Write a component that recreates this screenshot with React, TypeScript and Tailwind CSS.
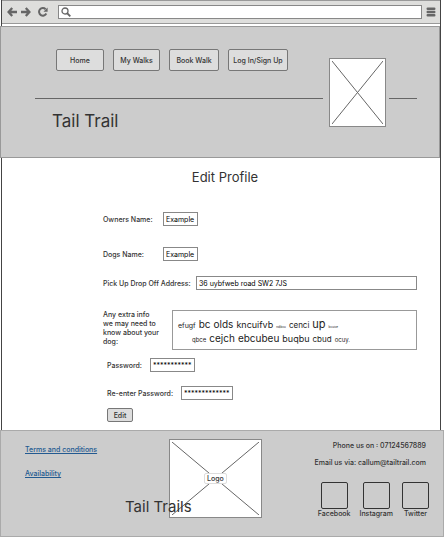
import { useId, type ReactNode } from "react";

const navItems = [
  { label: "Home", width: "w-12" },
  { label: "My Walks", width: "w-[47px]" },
  { label: "Book Walk", width: "w-[50px]" },
  { label: "Log In/Sign Up", width: "w-[60px]" },
];

const socials = ["Facebook", "Instagram", "Twitter"];

const notes = [
  [
    { text: "efugf", size: "text-[7px]" },
    { text: "bc", size: "text-[10px]" },
    { text: "olds", size: "text-[10px]" },
    { text: "kncuifvb", size: "text-[9px]" },
    { text: "ndjbcu", size: "text-[3px]" },
    { text: "cenci", size: "text-[8px]" },
    { text: "up", size: "text-[11px]" },
    { text: "bcuice", size: "text-[3px]" },
  ],
  [
    { text: "qbce", size: "text-[6px]" },
    { text: "cejch", size: "text-[10px]" },
    { text: "ebcubeu", size: "text-[10px]" },
    { text: "buqbu", size: "text-[9px]" },
    { text: "cbud", size: "text-[8px]" },
    { text: "ocuy.", size: "text-[6px]" },
  ],
];

function Crossed({ className }: { className: string }) {
  return (
    <svg className={className} viewBox="0 0 100 100" preserveAspectRatio="none" aria-hidden="true">
      <path d="M0 0L100 100M100 0L0 100" stroke="#666" strokeWidth="1" vectorEffect="non-scaling-stroke" fill="none" />
    </svg>
  );
}

function Toolbar() {
  return (
    <div className="flex h-6 items-center border-y border-[#999] bg-[#dededc] pr-1 pl-[5px]">
      <button aria-label="Back" className="mr-1 text-[#666]">
        <svg width="10" height="10" viewBox="0 0 10 10" fill="none" stroke="currentColor" strokeWidth="2.3">
          <path d="M5.2 1L1.6 5l3.6 4M2 5h8" />
        </svg>
      </button>
      <button aria-label="Forward" className="mr-[7px] text-[#666]">
        <svg width="10" height="10" viewBox="0 0 10 10" fill="none" stroke="currentColor" strokeWidth="2.3">
          <path d="M4.8 1l3.6 4-3.6 4M8 5H0" />
        </svg>
      </button>
      <button aria-label="Reload" className="mr-2.5 text-[#666]">
        <svg width="10" height="10" viewBox="0 0 10 10" fill="none" stroke="currentColor" strokeWidth="2">
          <path d="M8.3 6.5A3.8 3.8 0 1 1 7.6 2.2" />
          <path d="M9.6 .6v4.1H5.5z" fill="currentColor" stroke="none" />
        </svg>
      </button>
      <label className="flex h-[14px] min-w-0 flex-1 items-center border border-[#888] bg-white pl-0.5">
        <svg width="10" height="10" viewBox="0 0 10 10" fill="none" stroke="#666">
          <circle cx="4" cy="4" r="3" strokeWidth="1.3" />
          <path d="M6 6l3.3 3.3" strokeWidth="1.8" />
        </svg>
        <input aria-label="Address" className="min-w-0 flex-1 outline-none" />
      </label>
      <button aria-label="Menu" className="ml-1 text-[#666]">
        <svg width="10" height="10" viewBox="0 0 10 10" stroke="currentColor" strokeWidth="2.4" strokeLinecap="round">
          <path d="M1.7 1.7h6.6M1.7 5h6.6M1.7 8.3h6.6" />
        </svg>
      </button>
    </div>
  );
}

type FieldProps = { label: string; value: string; labelWidth: string; width: string; className: string };

function Field({ label, value, labelWidth, width, className }: FieldProps) {
  const id = useId();
  return (
    <div className={`flex items-center ${className}`}>
      <label htmlFor={id} className={`shrink-0 whitespace-nowrap ${labelWidth}`}>{label}</label>
      <input id={id} defaultValue={value} className={`h-[14px] border border-[#888] bg-white px-0.5 font-normal text-black outline-none ${width}`} />
    </div>
  );
}

function FooterLink({ children }: { children: ReactNode }) {
  return <a href="#" className="text-[#235a91] underline">{children}</a>;
}

export default function App() {
  return (
    <div className="bg-white pr-[3px] font-[Inter,'Liberation_Sans',sans-serif] text-[7px] leading-[9px] font-medium text-[#333]">
      <div className="mr-[3px] ml-px border-x border-[#444]">
        <Toolbar />
        <header className="-ml-0.5 mt-0.5 flex h-[132px] items-start border border-[#999] bg-[#ccc] pr-[22px] pl-[34px]">
          <div className="min-w-0 flex-1 pt-[22px]">
            <nav className="ml-[21px] flex gap-[9px]">
              {navItems.map((item) => (
                <button key={item.label} className={`h-[22px] shrink-0 rounded-xs border border-[#777] bg-[#ddd] whitespace-nowrap ${item.width}`}>
                  {item.label}
                </button>
              ))}
            </nav>
            <hr className="mt-[27px] border-[#666]" />
            <h1 className="mt-3 ml-[17px] text-[17px] leading-5 font-normal">Tail Trail</h1>
          </div>
          <div className="mt-[31px] mr-[3px] ml-1.5 h-[69px] w-[57px] border border-[#888] bg-white p-0.5">
            <Crossed className="size-full" />
          </div>
          <hr className="mt-[71px] w-7 border-[#666]" />
        </header>

        <main className="flex h-[272px] flex-col pt-[9px]">
          <h2 className="pl-2 text-center text-[13px] leading-5 font-normal">Edit Profile</h2>
          <form className="flex flex-col pr-[23px] pl-[101px]" onSubmit={(e) => e.preventDefault()}>
            <Field label="Owners Name:" value="Example" labelWidth="w-[60px]" width="w-[35px]" className="mt-[25px]" />
            <Field label="Dogs Name:" value="Example" labelWidth="w-[60px]" width="w-[35px]" className="mt-[21px]" />
            <Field label="Pick Up Drop Off Address:" value="36 uybfweb road SW2 7JS" labelWidth="w-[93px]" width="min-w-0 flex-1" className="mt-[15px]" />
            <div className="mt-5 flex h-10">
              <span id="notes-label" className="w-[69px] shrink-0">
                Any extra info<br />we may need to<br />know about your<br />dog:
              </span>
              <div
                role="textbox"
                aria-multiline="true"
                aria-labelledby="notes-label"
                contentEditable
                suppressContentEditableWarning
                className="min-w-0 flex-1 border border-[#999] pt-1.5 pl-[5px] font-normal whitespace-nowrap text-[#222] outline-none"
              >
                {notes.map((line, i) => (
                  <div key={i} className={`flex h-[14px] items-baseline gap-[3px] leading-[14px] ${i === 1 ? "pl-3.5" : ""}`}>
                    {line.map((word) => (
                      <span key={word.text} className={word.size}>{word.text}</span>
                    ))}
                  </div>
                ))}
              </div>
            </div>
            <Field label="Password:" value="***********" labelWidth="w-[43px]" width="w-[45px]" className="mt-2 ml-1" />
            <Field label="Re-enter Password:" value="*************" labelWidth="w-[74px]" width="w-[52px]" className="mt-3.5 ml-1" />
            <button className="mt-2 ml-1 h-[14px] w-[26px] rounded-xs border border-[#777] bg-[#ddd]">Edit</button>
          </form>
        </main>
      </div>

      <footer className="flex h-[107px] items-start border border-[#aaa] bg-[#ccc] pt-2 pr-3.5 pl-6">
        <div className="flex w-36 shrink-0 flex-col items-start gap-[15px] pt-1.5">
          <FooterLink>Terms and conditions</FooterLink>
          <FooterLink>Availability</FooterLink>
        </div>
        <div className="relative h-[79px] w-[93px] shrink-0 border border-[#888] bg-white p-0.5">
          <Crossed className="size-full" />
          <span className="absolute top-[33px] left-[34px] rounded-xs border border-[#ddd] bg-white px-0.5">Logo</span>
          <h2 className="absolute -left-[45px] top-[57px] text-[15px] leading-5 font-normal whitespace-nowrap">Tail Trails</h2>
        </div>
        <div className="flex flex-1 flex-col items-end pt-0.5">
          <p className="mr-[3px] whitespace-nowrap">Phone us on : 07124567889</p>
          <p className="mt-2 mr-[3px] whitespace-nowrap">Email us via: callum@tailtrail.com</p>
          <div className="mt-[15px] flex gap-[9px]">
            {socials.map((name) => (
              <a key={name} href="#" className="flex flex-col items-center">
                <span className="size-[27px] rounded-xs border border-[#333]" />
                {name}
              </a>
            ))}
          </div>
        </div>
      </footer>
    </div>
  );
}
